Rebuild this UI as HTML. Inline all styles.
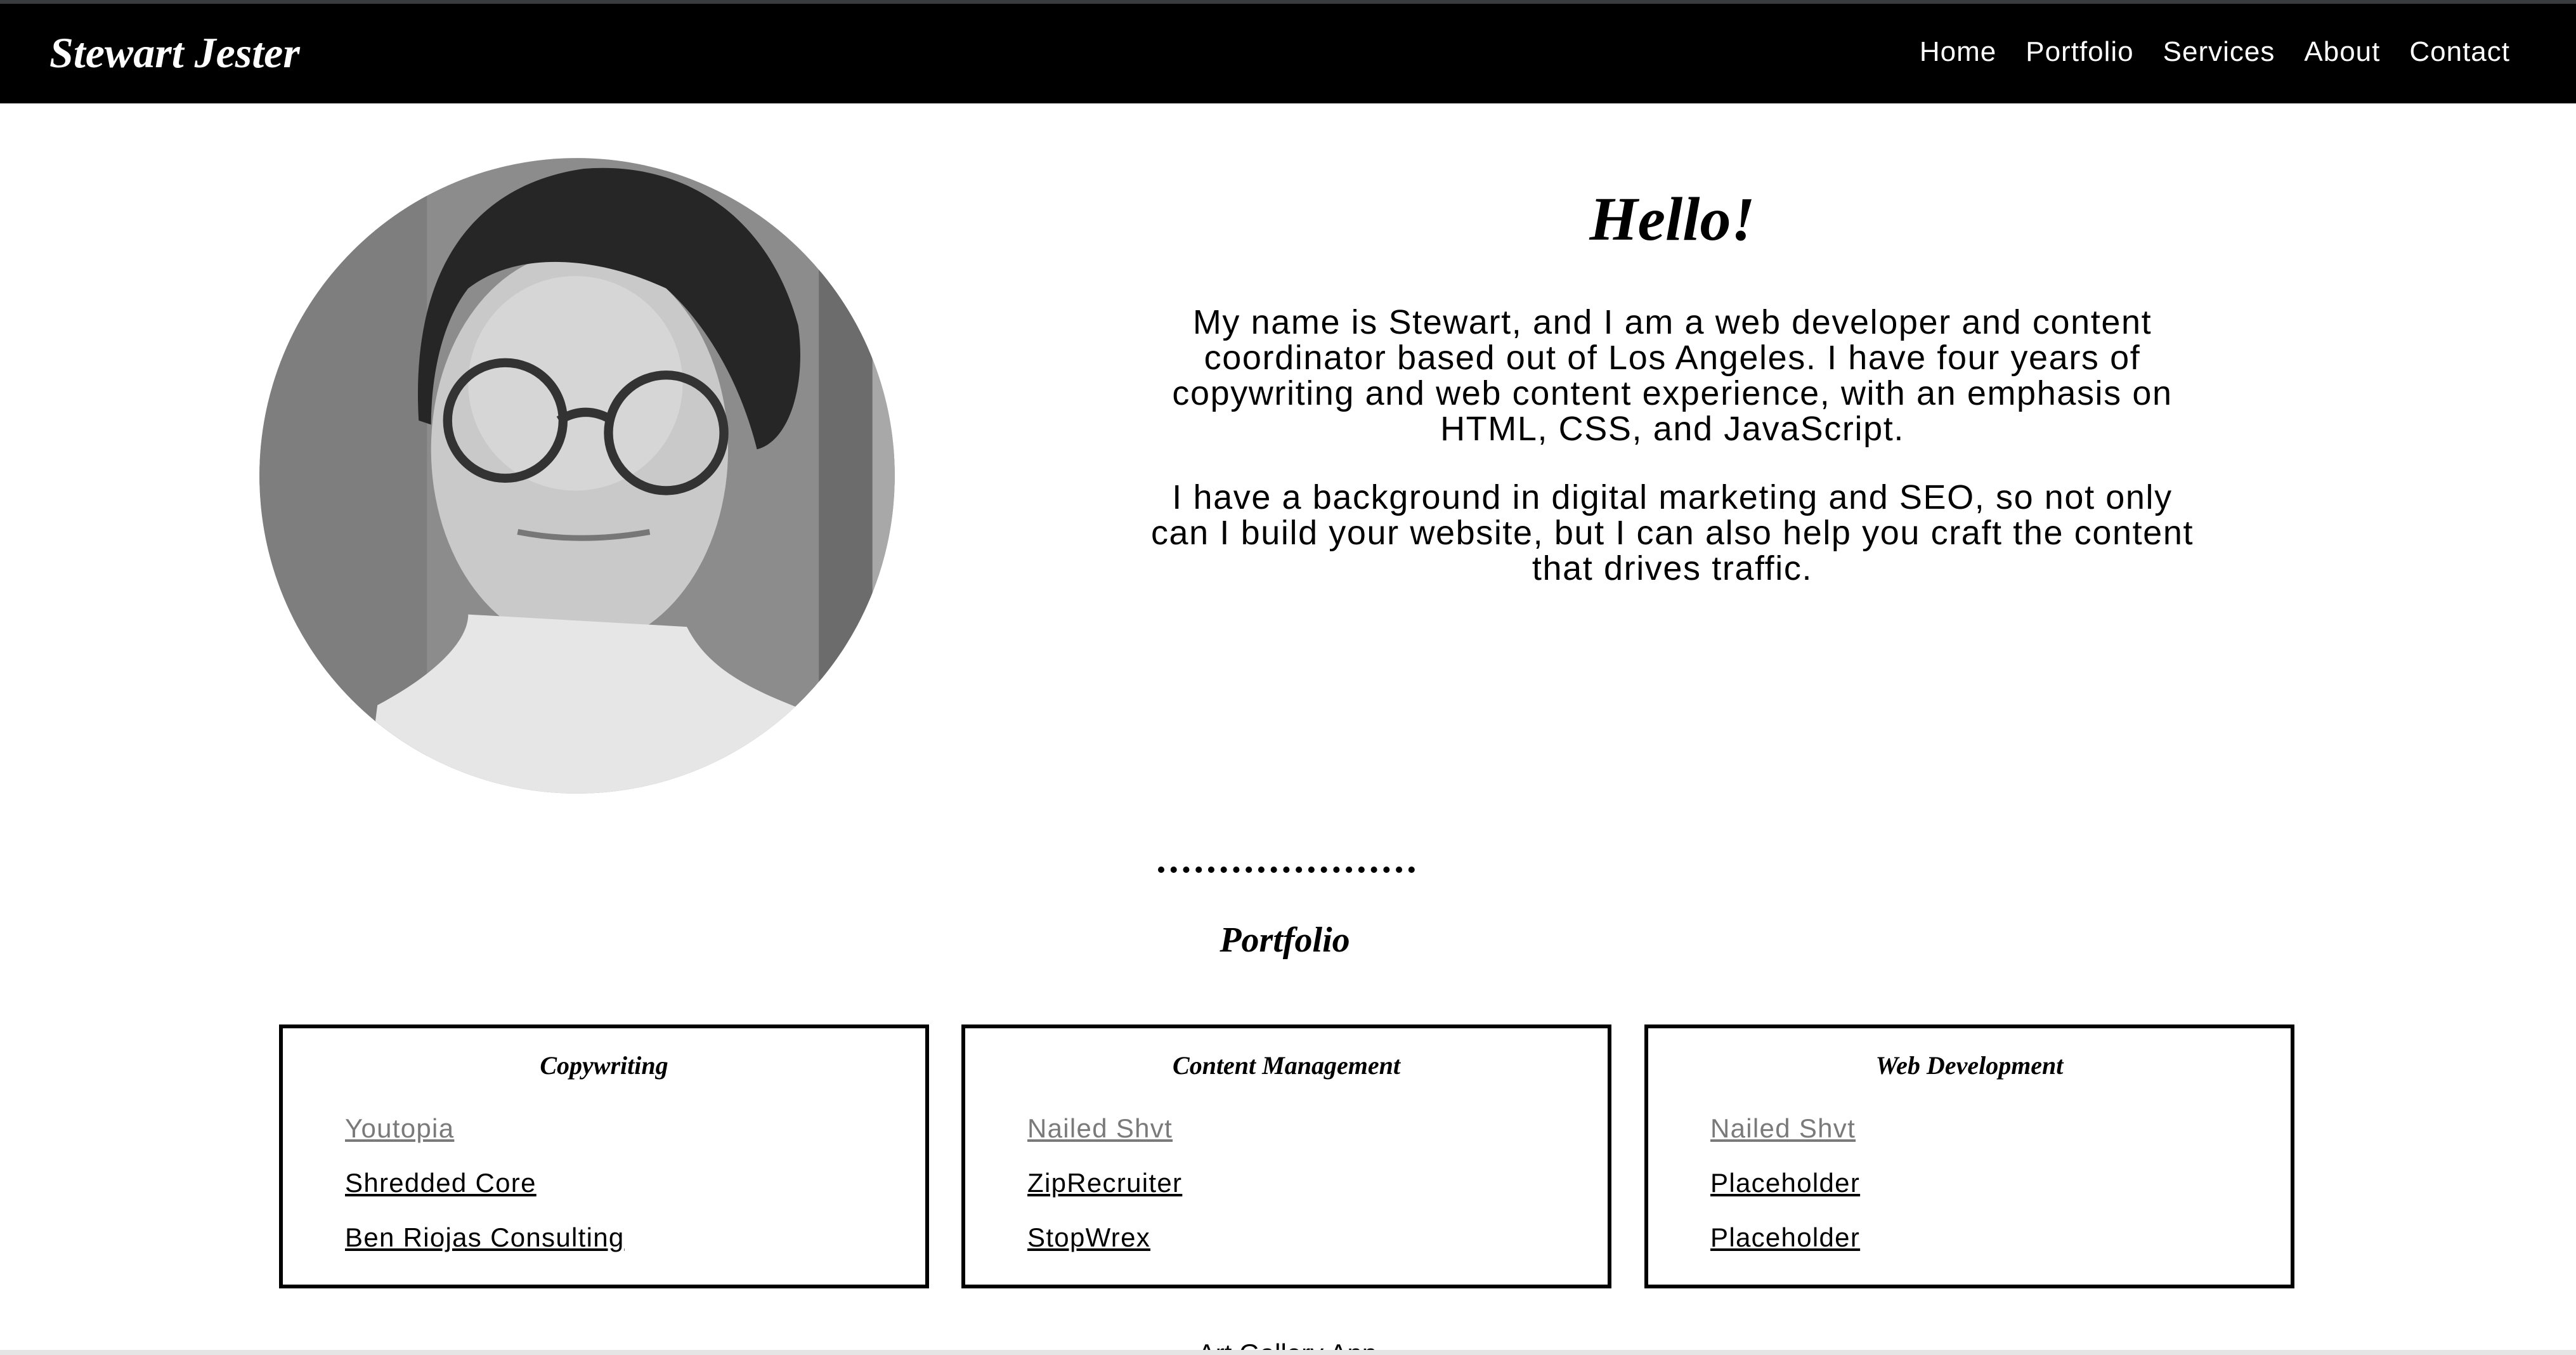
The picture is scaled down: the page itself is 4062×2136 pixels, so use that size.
<!DOCTYPE html>
<html><head><meta charset="utf-8"><style>
html,body{margin:0;padding:0;width:4062px;height:2136px;overflow:hidden;background:#fff;position:relative;font-family:"Liberation Sans",sans-serif;color:#000}
.top{position:absolute;left:0;top:0;width:4062px;height:6px;background:#3a3b3d}
.hdr{position:absolute;left:0;top:6px;width:4062px;height:157px;background:#000}
.logo{position:absolute;left:78px;top:38px;font-family:"Liberation Serif",serif;font-style:italic;font-weight:bold;font-size:68px;color:#fff}
.nav{position:absolute;right:104px;top:51px;font-size:44px;letter-spacing:1px;color:#fff}
.nav span{margin-left:46px}
.abs{position:absolute}
.hello{left:2137px;width:1000px;top:290px;text-align:center;font-family:"Liberation Serif",serif;font-style:italic;font-weight:bold;font-size:98px}
.para{left:1637px;width:2000px;top:480px;text-align:center;font-size:54px;letter-spacing:1.6px;line-height:56px;white-space:nowrap}
.para p{margin:0 0 52px}
.dots{left:1826px;top:1366px;width:405px;border-top:10px dotted #000}
.pf{left:1826px;width:400px;top:1450px;text-align:center;font-family:"Liberation Serif",serif;font-style:italic;font-weight:bold;font-size:56px}
.box{position:absolute;top:1615px;width:1013px;height:404px;border:6px solid #000}
.box h3{margin:0;position:absolute;top:35px;width:100%;text-align:center;font-family:"Liberation Serif",serif;font-style:italic;font-weight:bold;font-size:40px}
.box a{position:absolute;left:98px;font-size:42px;letter-spacing:1.3px;color:#000;text-decoration:underline}
.box a.v{color:#7a7a7a}
</style></head><body>
<div class="top"></div>
<div class="hdr"><div class="logo">Stewart Jester</div>
<div class="nav"><span>Home</span><span>Portfolio</span><span>Services</span><span>About</span><span>Contact</span></div></div>

<svg class="abs" style="left:400px;top:240px" width="1020" height="1020" viewBox="0 0 1568 1568">
<defs><clipPath id="c"><circle cx="784" cy="784" r="770"/></clipPath></defs>
<g clip-path="url(#c)">
<rect width="1568" height="1568" fill="#8c8c8c"/>
<rect x="0" y="0" width="420" height="1568" fill="#7e7e7e"/>
<rect x="1370" y="250" width="130" height="1318" fill="#6c6c6c"/>
<rect x="1500" y="250" width="80" height="1318" fill="#a8a8a8"/>
<ellipse cx="790" cy="720" rx="360" ry="480" fill="#c9c9c9"/>
<ellipse cx="780" cy="560" rx="260" ry="260" fill="#d6d6d6"/>
<path d="M400 650 C380 300 520 80 800 40 C1050 20 1250 160 1320 420 C1340 560 1300 700 1220 720 C1180 560 1100 420 1000 330 C850 260 650 230 520 330 C450 420 430 560 430 660 Z" fill="#262626"/>
<path d="M260 1650 L300 1340 C450 1260 520 1180 520 1120 L1050 1150 C1100 1250 1200 1300 1330 1350 L1400 1650 Z" fill="#e6e6e6"/>
<circle cx="610" cy="650" r="140" fill="none" stroke="#333" stroke-width="22"/>
<circle cx="1000" cy="680" r="140" fill="none" stroke="#333" stroke-width="22"/>
<path d="M740 650 Q805 610 870 650" stroke="#333" stroke-width="22" fill="none"/>
<path d="M640 920 Q790 950 960 920" stroke="#777" stroke-width="14" fill="none"/>
</g></svg>

<div class="abs hello">Hello!</div>
<div class="abs para"><p>My name is Stewart, and I am a web developer and content<br>coordinator based out of Los Angeles. I have four years of<br>copywriting and web content experience, with an emphasis on<br>HTML, CSS, and JavaScript.</p><p>I have a background in digital marketing and SEO, so not only<br>can I build your website, but I can also help you craft the content<br>that drives traffic.</p></div>
<div class="abs dots"></div>
<div class="abs pf">Portfolio</div>

<div class="box" style="left:440px"><h3>Copywriting</h3>
<a class="v" style="top:134px">Youtopia</a><a style="top:220px">Shredded Core</a><a style="top:306px">Ben Riojas Consulting</a></div>
<div class="box" style="left:1516px"><h3>Content Management</h3>
<a class="v" style="top:134px">Nailed Shvt</a><a style="top:220px">ZipRecruiter</a><a style="top:306px">StopWrex</a></div>
<div class="box" style="left:2593px"><h3>Web Development</h3>
<a class="v" style="top:134px">Nailed Shvt</a><a style="top:220px">Placeholder</a><a style="top:306px">Placeholder</a></div>

<div class="abs" style="left:1800px;top:2110px;font-size:42px;width:460px;text-align:center">Art Gallery App</div>
<div class="abs" style="left:0;top:2128px;width:4062px;height:8px;background:#e5e5e5"></div>
</body></html>
